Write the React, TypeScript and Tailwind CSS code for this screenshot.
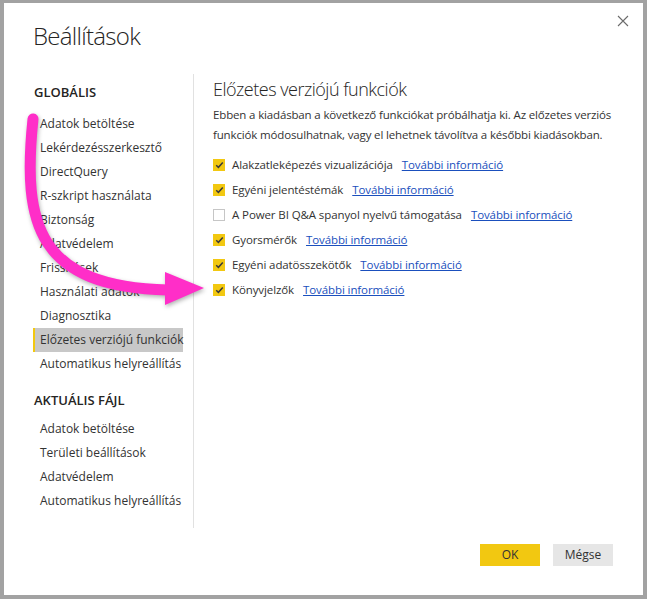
import { useState } from "react";

const GLOBAL_ITEMS = [
    "Adatok betöltése",
    "Lekérdezésszerkesztő",
    "DirectQuery",
    "R-szkript használata",
    "Biztonság",
    "Adatvédelem",
    "Frissítések",
    "Használati adatok",
    "Diagnosztika",
    "Előzetes verziójú funkciók",
    "Automatikus helyreállítás",
];

const FILE_ITEMS = [
    "Adatok betöltése",
    "Területi beállítások",
    "Adatvédelem",
    "Automatikus helyreállítás",
];

const FEATURES = [
    { label: "Alakzatleképezés vizualizációja", checked: true },
    { label: "Egyéni jelentéstémák", checked: true },
    { label: "A Power BI Q&A spanyol nyelvű támogatása", checked: false },
    { label: "Gyorsmérők", checked: true },
    { label: "Egyéni adatösszekötők", checked: true },
    { label: "Könyvjelzők", checked: true },
];

function NavItem({ label, active }: { label: string; active?: boolean }) {
    return (
        <div
            className={`h-[24px] w-[150px] whitespace-nowrap border-l-2 pl-[5px] text-[12px] leading-[24px] text-[#333] ${active ? "border-[#f2c811] bg-[#c8c8c8]" : "border-transparent"}`}
        >
            {label}
        </div>
    );
}

function Checkbox({ checked }: { checked: boolean }) {
    if (!checked) {
        return <span className="h-[12px] w-[12px] shrink-0 border border-[#c6c6c6] bg-white" />;
    }
    return (
        <span className="flex h-[12px] w-[12px] shrink-0 items-center justify-center bg-[#f2c811]">
            <svg width="9" height="8" viewBox="0 0 9 8">
                <path d="M1.2 4.2 L3.4 6.3 L7.8 1.4" fill="none" stroke="#3a3a3a" strokeWidth="1.5" />
            </svg>
        </span>
    );
}

export default function App() {
    const [features, setFeatures] = useState(FEATURES);

    return (
        <div
            className="relative flex h-[599px] w-[647px] flex-col border-x-4 border-b-4 border-t-[3px] border-[#a2a2a2] bg-white"
            style={{ fontFamily: '"Open Sans", "Noto Sans", sans-serif' }}
        >
            <button className="absolute right-[10px] top-[8px] p-1" aria-label="Bezárás">
                <svg width="12" height="12" viewBox="0 0 12 12">
                    <path d="M1 1 L11 11 M11 1 L1 11" stroke="#6b6b6b" strokeWidth="1.1" />
                </svg>
            </button>

            <h1 className="pl-[29px] pt-[17px] text-[24px] font-light leading-[32px] tracking-[-0.7px] text-[#252423]">
                Beállítások
            </h1>

            <div className="mt-[22px] flex h-[454px]">
                {/* left nav */}
                <div className="w-[189px] shrink-0 pl-[29px] pt-[8px]">
                    <div className="pl-[1px] text-[13px] font-semibold leading-[20px] text-[#252423]">GLOBÁLIS</div>
                    <div className="mt-[10px]">
                        {GLOBAL_ITEMS.map((item, i) => (
                            <NavItem key={item} label={item} active={i === 9} />
                        ))}
                    </div>
                    <div className="mt-[14px] pl-[1px] text-[13px] font-semibold leading-[20px] text-[#252423]">
                        AKTUÁLIS FÁJL
                    </div>
                    <div className="mt-[7px]">
                        {FILE_ITEMS.map((item) => (
                            <NavItem key={item} label={item} />
                        ))}
                    </div>
                </div>

                <div className="w-px bg-[#e1e1e1]" />

                {/* content */}
                <div className="flex-1 pl-[19px] pt-[3px]">
                    <h2 className="text-[18px] font-light leading-[24px] tracking-[-0.5px] text-[#252423]">
                        Előzetes verziójú funkciók
                    </h2>
                    <p className="mt-[4px] whitespace-nowrap text-[11.5px] leading-[20px] tracking-[-0.15px] text-[#333]">
                        Ebben a kiadásban a következő funkciókat próbálhatja ki. Az előzetes verziós
                        <br />
                        funkciók módosulhatnak, vagy el lehetnek távolítva a későbbi kiadásokban.
                    </p>
                    <div className="mt-[7px]">
                        {features.map((f, i) => (
                            <div
                                key={f.label}
                                className="flex h-[25px] items-center text-[11.5px] tracking-[-0.1px] text-[#333]"
                            >
                                <button
                                    className="flex"
                                    onClick={() =>
                                        setFeatures(features.map((x, j) => (j === i ? { ...x, checked: !x.checked } : x)))
                                    }
                                >
                                    <Checkbox checked={f.checked} />
                                </button>
                                <span className="ml-[7px]">{f.label}</span>
                                <a href="#" className="ml-[9px] text-[#1a4fbd] underline">
                                    További információ
                                </a>
                            </div>
                        ))}
                    </div>
                </div>
            </div>

            <div className="mt-[16px] flex justify-end gap-[13px] pr-[30px]">
                <button className="h-[22px] w-[60px] bg-[#f2c811] text-[12px] text-[#333]">OK</button>
                <button className="h-[22px] w-[60px] bg-[#e6e6e6] text-[12px] text-[#333]">Mégse</button>
            </div>

            {/* pink callout arrow */}
            <svg
                className="pointer-events-none absolute left-[-4px] top-[-3px]"
                width="647"
                height="599"
                viewBox="0 0 647 599"
                style={{ filter: "drop-shadow(1px 2px 2px rgba(0,0,0,0.3))" }}
            >
                <path d="M33 119 C 22 225, 38 287, 168 290" fill="none" stroke="#ff2ec8" strokeWidth="11" strokeLinecap="round" />
                <polygon points="165,272 204,288 165,305" fill="#ff2ec8" />
            </svg>
        </div>
    );
}
